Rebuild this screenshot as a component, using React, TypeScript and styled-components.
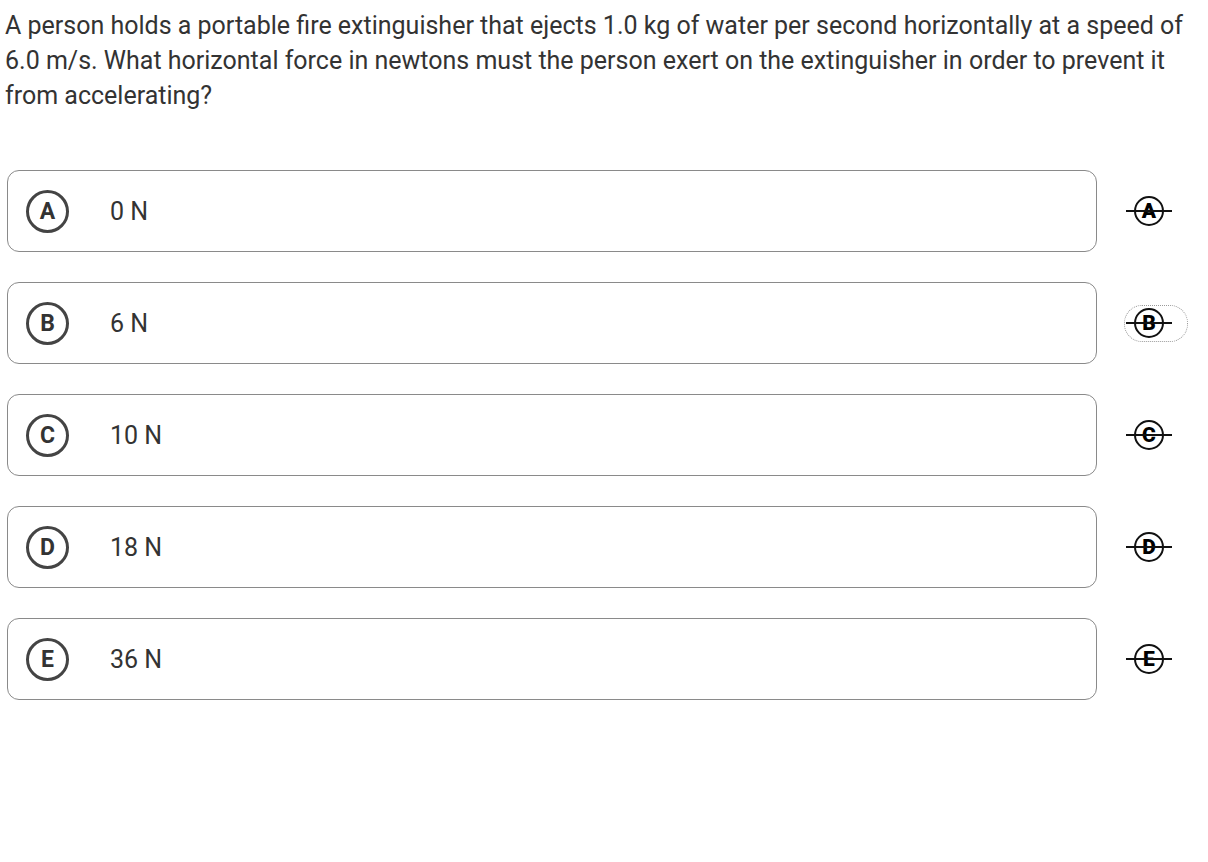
import React from "react";
import styled, { createGlobalStyle } from "styled-components";

const Global = createGlobalStyle`
  html, body { margin: 0; padding: 0; background: #fff; }
  body { font-family: Roboto, "Liberation Sans", Arial, sans-serif; }
`;

const Page = styled.div`
  padding: 8px 5px;
  color: #333;
`;

const Question = styled.p`
  margin: 0;
  font-size: 25px;
  line-height: 35px;
  color: #333;
  max-width: 1200px;
`;

const Options = styled.div`
  margin-top: 57px;
  display: flex;
  flex-direction: column;
  gap: 30px;
`;

const Row = styled.div`
  display: flex;
  align-items: center;
`;

const Card = styled.div`
  box-sizing: border-box;
  margin-left: 2px;
  width: 1090px;
  height: 82px;
  border: 1px solid #8a8a8a;
  border-radius: 12px;
  display: flex;
  align-items: center;
  padding-left: 18px;
`;

const Letter = styled.span`
  box-sizing: border-box;
  width: 43px;
  height: 43px;
  border: 3px solid #444;
  border-radius: 50%;
  display: inline-flex;
  align-items: center;
  justify-content: center;
  font-weight: 700;
  font-size: 23px;
  line-height: 1;
  color: #333;
`;

const Answer = styled.span`
  margin-left: 41px;
  font-size: 25px;
  color: #333;
`;

const StrikeButton = styled.button<{ $focused?: boolean }>`
  box-sizing: border-box;
  margin-left: 27px;
  width: 64px;
  height: 37px;
  padding: 0 0 0 1px;
  background: none;
  border: 1px dotted ${(p) => (p.$focused ? "#9a9a9a" : "transparent")};
  border-radius: 18px;
  display: flex;
  align-items: center;
  cursor: pointer;
`;

const StrikeIcon = styled.span`
  position: relative;
  width: 46px;
  height: 30px;
  display: flex;
  align-items: center;
  justify-content: center;
  &::before {
    content: "";
    position: absolute;
    left: 0;
    right: 0;
    top: 50%;
    height: 2px;
    margin-top: -1px;
    background: #111;
  }
`;

const StrikeCircle = styled.span`
  box-sizing: border-box;
  width: 30px;
  height: 30px;
  border: 2px solid #111;
  border-radius: 50%;
  display: flex;
  align-items: center;
  justify-content: center;
  font-family: Roboto, "Liberation Sans", Arial, sans-serif;
  font-weight: 900;
  font-size: 21px;
  color: #000;
  line-height: 1;
`;

const options = [
  { key: "A", text: "0 N" },
  { key: "B", text: "6 N" },
  { key: "C", text: "10 N" },
  { key: "D", text: "18 N" },
  { key: "E", text: "36 N" },
];

export default function App() {
  return (
    <Page>
      <Global />
      <Question>
        A person holds a portable fire extinguisher that ejects 1.0 kg of water per second horizontally at a speed of
        6.0 m/s. What horizontal force in newtons must the person exert on the extinguisher in order to prevent it
        from accelerating?
      </Question>
      <Options>
        {options.map((o) => (
          <Row key={o.key}>
            <Card>
              <Letter>{o.key}</Letter>
              <Answer>{o.text}</Answer>
            </Card>
            <StrikeButton $focused={o.key === "B"} aria-label={`Eliminate ${o.key}`}>
              <StrikeIcon>
                <StrikeCircle>{o.key}</StrikeCircle>
              </StrikeIcon>
            </StrikeButton>
          </Row>
        ))}
      </Options>
    </Page>
  );
}
